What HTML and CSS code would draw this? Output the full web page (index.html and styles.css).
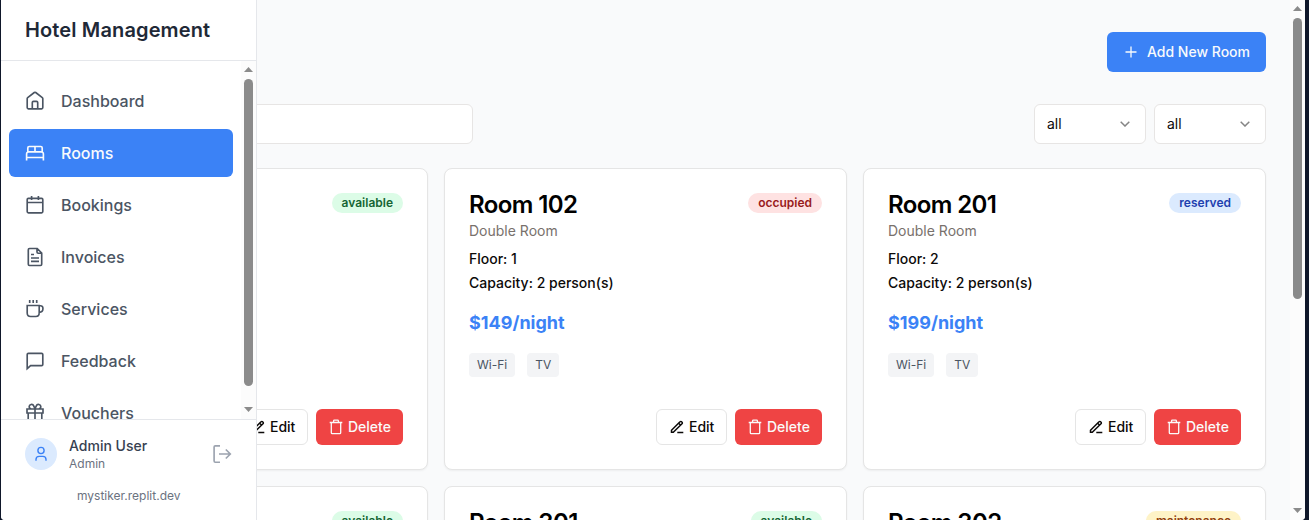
FILE: index.html
```html
<!DOCTYPE html>
<html lang="en">
<head>
<meta charset="utf-8">
<title>Hotel Management</title>
<link rel="stylesheet" href="styles.css">
</head>
<body>
<svg class="symbols" aria-hidden="true">
  <symbol id="edit" viewBox="0 0 14 14"><path d="M1.5 12.3h1.8L12 3.8a1.15 1.15 0 0 0 0-1.7l-.3-.3a1.15 1.15 0 0 0-1.7 0L1.5 10.3zM8.7 3.2l2 2M7.3 12.6h6"/></symbol>
  <symbol id="trash" viewBox="0 0 14 16"><path d="M.7 3.5h12.6M2.3 3.5v10.2q0 .9.9.9h7.6q.9 0 .9-.9V3.5M4.6 3.3V1.9q0-.8.8-.8h3.2q.8 0 .8.8v1.4"/></symbol>
  <symbol id="down" viewBox="0 0 10 6"><path d="M.7.7 5 5 9.3.7"/></symbol>
</svg>
<div class="app">
  <main class="content">
    <div class="topbar">
      <button class="btn add"><svg class="icon plus" viewBox="0 0 12 12"><path d="M6 .5v11M.5 6h11"/></svg>Add New Room</button>
    </div>
    <div class="filters">
      <div class="search"></div>
      <div class="selects">
        <div class="select">all<svg class="icon chevron"><use href="#down"/></svg></div>
        <div class="select">all<svg class="icon chevron"><use href="#down"/></svg></div>
      </div>
    </div>
    <div class="rooms">
      <article class="card">
        <header class="card-head"><div></div><span class="badge available">available</span></header>
        <footer class="actions"><button class="btn edit"><svg class="icon pen"><use href="#edit"/></svg>Edit</button><button class="btn delete"><svg class="icon bin"><use href="#trash"/></svg>Delete</button></footer>
      </article>
      <article class="card">
        <header class="card-head"><div><h2>Room 102</h2><p class="type">Double Room</p></div><span class="badge occupied">occupied</span></header>
        <p class="fact">Floor: 1</p><p class="fact">Capacity: 2 person(s)</p>
        <p class="price">$149/night</p>
        <div class="tags"><span class="tag">Wi-Fi</span><span class="tag">TV</span></div>
        <footer class="actions"><button class="btn edit"><svg class="icon pen"><use href="#edit"/></svg>Edit</button><button class="btn delete"><svg class="icon bin"><use href="#trash"/></svg>Delete</button></footer>
      </article>
      <article class="card">
        <header class="card-head"><div><h2>Room 201</h2><p class="type">Double Room</p></div><span class="badge reserved">reserved</span></header>
        <p class="fact">Floor: 2</p><p class="fact">Capacity: 2 person(s)</p>
        <p class="price">$199/night</p>
        <div class="tags"><span class="tag">Wi-Fi</span><span class="tag">TV</span></div>
        <footer class="actions"><button class="btn edit"><svg class="icon pen"><use href="#edit"/></svg>Edit</button><button class="btn delete"><svg class="icon bin"><use href="#trash"/></svg>Delete</button></footer>
      </article>
      <article class="card"><header class="card-head"><div></div><span class="badge available">available</span></header></article>
      <article class="card"><header class="card-head"><h2>Room 301</h2><span class="badge available">available</span></header></article>
      <article class="card"><header class="card-head"><h2>Room 302</h2><span class="badge maintenance">maintenance</span></header></article>
    </div>
  </main>
  <div class="scrollbar page-scroll"><i class="arrow up"></i><i class="thumb"></i><i class="arrow"></i></div>

  <aside class="sidebar">
    <h1 class="brand">Hotel Management</h1>
    <div class="nav-area">
      <nav class="nav">
        <a class="item"><svg class="icon nav-icon" viewBox="0 0 20 20"><path d="M2.2 7.6q0-.6.5-1L9.3 1.5q.7-.5 1.4 0l6.6 5.1q.5.4.5 1v9q0 1.2-1.2 1.2H3.4q-1.2 0-1.2-1.2zM7.3 17.5v-6q0-1.2 1.2-1.2h3q1.2 0 1.2 1.2v6"/></svg>Dashboard</a>
        <a class="item active"><svg class="icon nav-icon" viewBox="0 0 20 20"><path d="M1.6 17.6v-6.8q0-1.3 1.2-1.7V4.9q0-1.4 1.4-1.4h11.6q1.4 0 1.4 1.4v4.2q1.2.4 1.2 1.7v6.8M1.6 14.5h16.8M2.5 8.9h15M10 3.5v5.2"/></svg>Rooms</a>
        <a class="item"><svg class="icon nav-icon" viewBox="0 0 20 20"><path d="M3.4 3.3h13.2q1.2 0 1.2 1.2v12.1q0 1.2-1.2 1.2H3.4q-1.2 0-1.2-1.2V4.5q0-1.2 1.2-1.2zM2.2 7.5h15.6M6.6 1v4M13.4 1v4"/></svg>Bookings</a>
        <a class="item"><svg class="icon nav-icon" viewBox="0 0 20 20"><path d="M12.2 1.5H4.5q-1.2 0-1.2 1.2v14.6q0 1.2 1.2 1.2h11q1.2 0 1.2-1.2V6zM12 1.5V5q0 1.2 1.2 1.2h3.5M6 7.5h3M6 11h8M6 14.4h8"/></svg>Invoices</a>
        <a class="item"><svg class="icon nav-icon" viewBox="0 0 20 20"><path d="M2.2 6.5h12v7.6q0 3.4-3.4 3.4H5.6q-3.4 0-3.4-3.4zM14.2 6.7h1.3a2.4 2.4 0 0 1 2.4 2.4v1q0 3.2-3.7 3.2M4.7 1v3M8.2 1v3M11.7 1v3"/></svg>Services</a>
        <a class="item"><svg class="icon nav-icon" viewBox="0 0 20 20"><path d="M2.2 17.6V3.6q0-1.2 1.2-1.2h13.2q1.2 0 1.2 1.2v9.8q0 1.2-1.2 1.2H5.6z"/></svg>Feedback</a>
        <a class="item"><svg class="icon nav-icon" viewBox="0 0 20 20"><path d="M2 6h16v4H2zM3.2 10v8.2h13.6V10M10 6v12M10 6H6.5a2.3 2.3 0 1 1 2.2-3Q9.5 4.2 10 6q.5-1.8 1.3-3a2.3 2.3 0 1 1 2.2 3z"/></svg>Vouchers</a>
      </nav>
      <div class="scrollbar nav-scroll"><i class="arrow up"></i><i class="thumb"></i><i class="arrow"></i></div>
    </div>
    <div class="account">
      <div class="user">
        <span class="avatar"><svg class="icon person" viewBox="0 0 14 16"><circle cx="7" cy="4.5" r="3.1"/><path d="M2 14.8v-1.3q0-3.1 3.1-3.1h3.8q3.1 0 3.1 3.1v1.3"/></svg></span>
        <div class="who"><p class="name">Admin User</p><p class="role">Admin</p></div>
        <svg class="icon logout" viewBox="0 0 20 20"><path d="M8 1.8H3.3q-1.2 0-1.2 1.2v14q0 1.2 1.2 1.2H8M7 10h11M13.8 5.5l4.5 4.5-4.5 4.5"/></svg>
      </div>
      <p class="host">mystiker.replit.dev</p>
    </div>
  </aside>
</div>
</body>
</html>
```
FILE: styles.css
```css
* { box-sizing: border-box; }
body { margin: 0; height: 520px; overflow: hidden; padding: 0 4px 0 1px; background: #0f172a; font-family: Inter, sans-serif; font-size: 14px; line-height: 20px; color: #0c0a09; }
h1, h2, p { margin: 0; }
.symbols { display: none; }
.app { position: relative; display: flex; height: 520px; overflow: hidden; background: #f9fafb; border-radius: 0 0 4px 4px; }
.icon { display: block; flex: none; fill: none; stroke: currentColor; stroke-width: 1.5; }

.content { flex: 1; min-width: 0; padding: 32px 24px 0; }
.topbar { display: flex; justify-content: flex-end; margin-bottom: 32px; }
.btn { display: flex; align-items: center; border: 0; border-radius: 6px; font: 500 14px/20px Inter, sans-serif; white-space: nowrap; }
.add { width: 159px; height: 40px; padding: 0 0 0 18px; gap: 10px; background: #3b82f6; color: #f8fafc; }
.plus { width: 12px; height: 12px; stroke-width: 1.3; }
.filters { display: flex; justify-content: space-between; margin-bottom: 24px; }
.search { width: 448px; height: 40px; background: #fff; border: 1px solid #e7e5e4; border-radius: 6px; }
.selects { display: flex; gap: 8px; }
.select { display: flex; align-items: center; justify-content: space-between; width: 112px; height: 40px; padding: 0 15px 0 12px; border: 1px solid #e7e5e4; border-radius: 6px; background: #fff; }
.chevron { width: 10px; height: 6px; color: #858585; }

.rooms { display: grid; grid-template-columns: repeat(3, 1fr); grid-auto-rows: 302px; gap: 16px; }
.card { display: flex; flex-direction: column; padding: 24px; border: 1px solid #e5e5e5; border-radius: 8px; background: #fff; box-shadow: 0 1px 2px rgba(0,0,0,.05); }
.card-head { display: flex; justify-content: space-between; align-items: flex-start; margin-bottom: 8px; }
h2 { font-size: 24px; line-height: 24px; font-weight: 600; letter-spacing: -.6px; color: #000; }
.type { margin-top: 4px; color: #78716c; }
.badge { height: 20px; padding: 2px 10px; border-radius: 10px; font-size: 12px; line-height: 16px; font-weight: 600; }
.available { background: #dcfce7; color: #166534; }
.occupied { background: #fee2e2; color: #991b1b; }
.reserved { background: #dbeafe; color: #1e40af; }
.maintenance { background: #fef3c7; color: #92400e; }
.fact { margin-bottom: 4px; font-weight: 500; }
.price { margin: 12px 0 16px; font-size: 18px; line-height: 28px; font-weight: 700; color: #3b82f6; }
.tags { display: flex; gap: 12px; }
.tag { padding: 4px 8px; border-radius: 4px; background: #f3f4f6; color: #4b5563; font-size: 12px; line-height: 16px; }
.actions { display: flex; justify-content: flex-end; gap: 8px; margin-top: auto; }
.edit { width: 71px; height: 36px; padding: 0 0 0 13px; gap: 5px; border: 1px solid #e5e5e5; background: #fff; color: #0c0a09; }
.delete { width: 87px; height: 36px; padding: 0 0 0 13px; gap: 5px; background: #ef4444; color: #fafaf9; }
.pen { width: 14px; height: 14px; }
.bin { width: 14px; height: 16px; stroke-width: 1.3; }

.scrollbar { display: flex; flex-direction: column; align-items: center; width: 15px; background: #fcfcfc; }
.arrow { width: 9px; height: 5px; background: #8b8b8b; clip-path: polygon(0 0, 100% 0, 50% 100%); }
.up { transform: rotate(180deg); }
.thumb { width: 9px; border-radius: 5px; background: #8b8b8b; }
.page-scroll { padding: 6px 0 7px; justify-content: space-between; }
.page-scroll .thumb { height: 281px; margin: 7px 0 auto; }
.nav-scroll { padding: 6px 0 7px; }
.nav-scroll .thumb { height: 307px; margin: 7px 0 auto; }

.sidebar { position: absolute; inset: 0 auto 0 0; display: flex; flex-direction: column; width: 256px; border-right: 1px solid #e5e7eb; background: #fff; }
.brand { height: 61px; padding: 16px 24px; border-bottom: 1px solid #e5e7eb; font-size: 20px; line-height: 28px; font-weight: 600; letter-spacing: .13px; color: #1f2937; white-space: nowrap; }
.nav-area { display: flex; flex: 1; min-height: 0; overflow: hidden; }
.nav { display: flex; flex: 1; flex-direction: column; gap: 4px; padding: 16px 8px; }
.item { display: flex; flex: none; align-items: center; gap: 16px; height: 48px; padding: 0 16px; border-radius: 6px; color: #4b5563; font-size: 16px; line-height: 24px; font-weight: 500; }
.active { background: #3b82f6; color: #f8fafc; }
.nav-icon { width: 20px; height: 20px; stroke-width: 1.65; }
.account { height: 101px; padding: 16px 24px; border-top: 1px solid #e5e7eb; }
.user { display: flex; align-items: center; height: 36px; margin-bottom: 16px; }
.avatar { display: grid; place-items: center; width: 32px; height: 32px; border-radius: 50%; background: #dbeafe; color: #3b82f6; }
.person { width: 14px; height: 16px; stroke-width: 1.4; }
.who { flex: 1; margin-left: 12px; }
.name { color: #374151; font-weight: 500; line-height: 20px; }
.role { color: #6b7280; font-size: 12px; line-height: 16px; }
.logout { width: 20px; height: 20px; stroke-width: 1.65; color: #9ca3af; }
.host { padding-left: 52px; color: #6b7280; font-size: 12px; line-height: 16px; }
```
